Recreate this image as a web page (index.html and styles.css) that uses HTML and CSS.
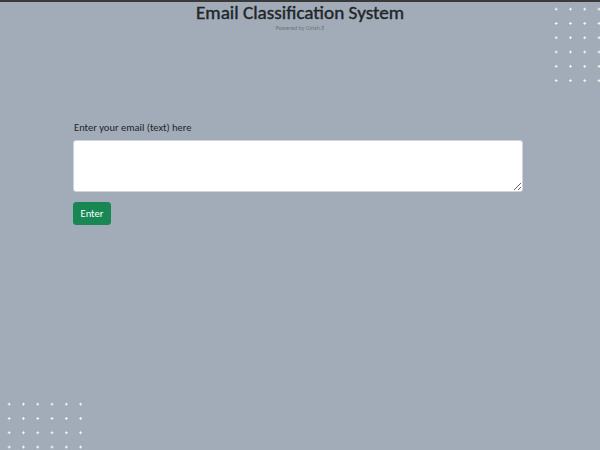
FILE: index.html
```html
<!DOCTYPE html>
<html>
<head>
<meta charset="utf-8">
<link rel="stylesheet" href="styles.css">
</head>
<body>
<div class="dots dots-tr"></div>
<div class="dots dots-bl"></div>
<header class="header">
  <h1 class="title">Email Classification System</h1>
  <p class="powered">Powered by Girish.E</p>
</header>
<main class="main">
  <form class="form">
    <label class="label" for="email">Enter your email (text) here</label>
    <textarea id="email" class="textarea"></textarea>
    <button type="button" class="btn">Enter</button>
  </form>
</main>
</body>
</html>
```
FILE: styles.css
```css
html, body {
  margin: 0;
  padding: 0;
  height: 100%;
}
body {
  background: #a1acb8;
  border-top: 2px solid #3a3a3a;
  box-sizing: border-box;
  font-family: Carlito, "Open Sans", "Noto Sans", sans-serif;
  color: #212529;
  position: relative;
  overflow: hidden;
}
.header {
  text-align: center;
}
.title {
  margin: 0;
  font-size: 19.2px;
  font-weight: 400;
  -webkit-text-stroke: 0.4px #212529;
  line-height: 22px;
}
.powered {
  margin: 0;
  font-size: 6px;
  line-height: 8px;
  color: #6c757d;
}
.main {
  padding: 88px 77px 0 73px;
}
.form {
  display: flex;
  flex-direction: column;
  align-items: flex-start;
}
.label {
  font-size: 10.5px;
  line-height: 15px;
  margin-bottom: 5px;
  padding-left: 1px;
}
.textarea {
  width: 100%;
  height: 52px;
  box-sizing: border-box;
  border: 1px solid #ced4da;
  border-radius: 3px;
  background: #fff;
  margin: 0;
  padding: 4px 7px;
}
.btn {
  margin-top: 10px;
  height: 23px;
  width: 38px;
  padding: 0;
  border: 1px solid #198754;
  background: #198754;
  color: #fff;
  border-radius: 3px;
  font-family: inherit;
  font-size: 10.5px;
}
.dots {
  position: absolute;
  background-image: radial-gradient(circle, #ffffff 0.9px, transparent 1.3px);
  background-size: 14.3px 14.3px;
}
.dots-tr {
  top: 0;
  left: 549px;
  width: 60px;
  height: 85px;
}
.dots-bl {
  left: 2px;
  top: 395px;
  width: 86px;
  height: 60px;
}
```
